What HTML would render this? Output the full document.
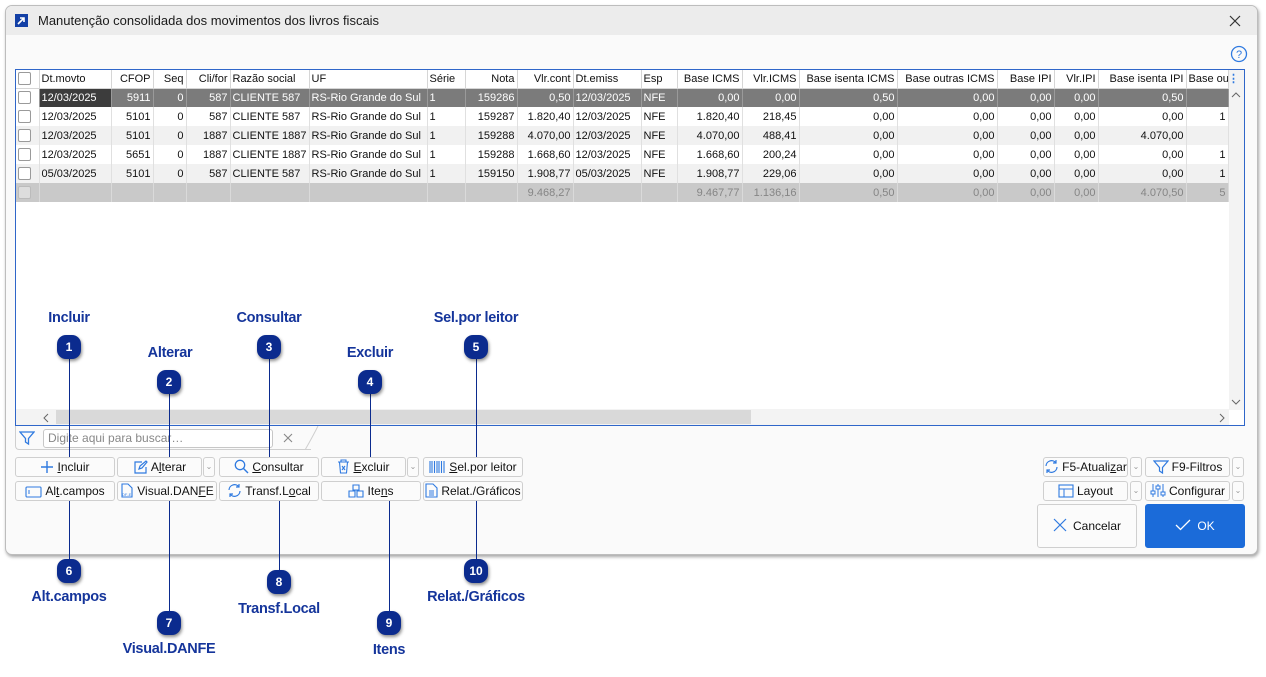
<!DOCTYPE html>
<html><head><meta charset="utf-8"><style>
*{box-sizing:border-box;margin:0;padding:0}
body{width:1266px;height:677px;background:#fff;font-family:"Liberation Sans",sans-serif;position:relative;overflow:hidden;font-size:12px;color:#111}
.win{position:absolute;left:5px;top:5px;width:1253px;height:550px;background:#fafafa;border:1px solid #bdbdbd;border-radius:7px;box-shadow:1px 2px 3px rgba(0,0,0,.35);overflow:hidden}
.title{position:absolute;left:0;top:0;right:0;height:29px;background:#ececec}
.title .t{position:absolute;left:32px;top:7px;font-size:13px;color:#1a1a1a}
.ico{position:absolute;left:9px;top:8px;width:13px;height:13px;background:#1340a6}
.abs{position:absolute}
.grid{position:absolute;left:15px;top:69px;width:1230px;height:357px;border:1px solid #2f66c9;background:#fff;overflow:hidden}
table{border-collapse:collapse;table-layout:fixed;position:absolute;left:0;top:0;width:1212px}
td{height:19px;border-right:1px solid #e0e0e0;white-space:nowrap;overflow:hidden;padding:0 2px;font-size:11px;text-align:right}
tr.h td{height:18px;background:#fff;border-right:1px solid #d6d6d6;border-bottom:1px solid #d6d6d6}
tr.s td{background:#7b7b7b;color:#fff;border-right:1px solid #9a9a9a}
tr.s td.d{background:#3c3c3c}
tr.a td{background:#f1f1f1}
tr.tt td{background:#c9c9c9;color:#858585;border-right:1px solid #dadada}
td.l{text-align:left}
.cb{display:inline-block;width:13px;height:13px;border:1px solid #9a9a9a;background:#fff;border-radius:2px;vertical-align:middle}
.btn{position:absolute;height:20px;border:1px solid #cfcfcf;border-radius:3px;background:#fbfbfb;font-size:12px;text-align:center;line-height:18px;color:#111}
.btn svg{vertical-align:-3px;margin-right:3px}
.dd{position:absolute;height:20px;width:12px;border:1px solid #cfcfcf;border-radius:3px;background:#fbfbfb;color:#999;font-size:8px;text-align:center;line-height:18px}
.badge{position:absolute;width:24px;height:24px;border-radius:9px;background:#0b2b8e;color:#fff;font-weight:bold;font-size:12px;text-align:center;line-height:24px;box-shadow:1px 2px 3px rgba(0,0,0,.45);z-index:5}
.lbl{position:absolute;color:#15359b;font-weight:bold;font-size:14.5px;transform:translateX(-50%);white-space:nowrap;z-index:5;letter-spacing:-0.3px}
.vl{position:absolute;width:1px;background:#0b2b8e;z-index:4}
</style></head><body>
<div class="win">
 <div class="title"><div class="ico"><svg width="13" height="13"><path d="M3 10L9 4M5 4h4v4" stroke="#fff" stroke-width="1.6" fill="none"/></svg></div><div class="t">Manutenção consolidada dos movimentos dos livros fiscais</div>
 <svg class="abs" style="left:1223px;top:9px" width="12" height="12"><path d="M1 1L11 11M11 1L1 11" stroke="#333" stroke-width="1.2"/></svg></div>
 <svg class="abs" style="left:1224px;top:39px" width="18" height="18"><circle cx="9" cy="9" r="7.5" stroke="#2f7ae0" stroke-width="1.3" fill="none"/><text x="9" y="13" font-size="11" text-anchor="middle" fill="#2f7ae0" font-family="Liberation Sans">?</text></svg>
</div>

<div class="grid">
<table>
<colgroup><col style="width:23px"><col style="width:72px"><col style="width:42px"><col style="width:33px"><col style="width:44px"><col style="width:79px"><col style="width:118px"><col style="width:38px"><col style="width:52px"><col style="width:56px"><col style="width:68px"><col style="width:36px"><col style="width:65px"><col style="width:57px"><col style="width:98px"><col style="width:100px"><col style="width:57px"><col style="width:44px"><col style="width:88px"><col style="width:42px"></colgroup>
<tr class="h"><td class="l"><span class="cb"></span></td><td class="l">Dt.movto</td><td>CFOP</td><td>Seq</td><td>Cli/for</td><td class="l">Razão social</td><td class="l">UF</td><td class="l">Série</td><td>Nota</td><td>Vlr.cont</td><td class="l">Dt.emiss</td><td class="l">Esp</td><td>Base ICMS</td><td>Vlr.ICMS</td><td>Base isenta ICMS</td><td>Base outras ICMS</td><td>Base IPI</td><td>Vlr.IPI</td><td>Base isenta IPI</td><td class="l">Base ou</td></tr>
<tr class="s"><td class="l" style="background:#fff"><span class="cb"></span></td><td class="l d">12/03/2025</td><td>5911</td><td>0</td><td>587</td><td class="l">CLIENTE 587</td><td class="l">RS-Rio Grande do Sul</td><td class="l">1</td><td>159286</td><td>0,50</td><td class="l">12/03/2025</td><td class="l">NFE</td><td>0,00</td><td>0,00</td><td>0,50</td><td>0,00</td><td>0,00</td><td>0,00</td><td>0,50</td><td></td></tr>
<tr><td class="l"><span class="cb"></span></td><td class="l">12/03/2025</td><td>5101</td><td>0</td><td>587</td><td class="l">CLIENTE 587</td><td class="l">RS-Rio Grande do Sul</td><td class="l">1</td><td>159287</td><td>1.820,40</td><td class="l">12/03/2025</td><td class="l">NFE</td><td>1.820,40</td><td>218,45</td><td>0,00</td><td>0,00</td><td>0,00</td><td>0,00</td><td>0,00</td><td>1</td></tr>
<tr class="a"><td class="l"><span class="cb"></span></td><td class="l">12/03/2025</td><td>5101</td><td>0</td><td>1887</td><td class="l">CLIENTE 1887</td><td class="l">RS-Rio Grande do Sul</td><td class="l">1</td><td>159288</td><td>4.070,00</td><td class="l">12/03/2025</td><td class="l">NFE</td><td>4.070,00</td><td>488,41</td><td>0,00</td><td>0,00</td><td>0,00</td><td>0,00</td><td>4.070,00</td><td></td></tr>
<tr><td class="l"><span class="cb"></span></td><td class="l">12/03/2025</td><td>5651</td><td>0</td><td>1887</td><td class="l">CLIENTE 1887</td><td class="l">RS-Rio Grande do Sul</td><td class="l">1</td><td>159288</td><td>1.668,60</td><td class="l">12/03/2025</td><td class="l">NFE</td><td>1.668,60</td><td>200,24</td><td>0,00</td><td>0,00</td><td>0,00</td><td>0,00</td><td>0,00</td><td>1</td></tr>
<tr class="a"><td class="l"><span class="cb"></span></td><td class="l">05/03/2025</td><td>5101</td><td>0</td><td>587</td><td class="l">CLIENTE 587</td><td class="l">RS-Rio Grande do Sul</td><td class="l">1</td><td>159150</td><td>1.908,77</td><td class="l">05/03/2025</td><td class="l">NFE</td><td>1.908,77</td><td>229,06</td><td>0,00</td><td>0,00</td><td>0,00</td><td>0,00</td><td>0,00</td><td>1</td></tr>
<tr class="tt"><td class="l"><span class="cb" style="background:#ddd;border-color:#bbb"></span></td><td></td><td></td><td></td><td></td><td></td><td></td><td></td><td></td><td>9.468,27</td><td></td><td></td><td>9.467,77</td><td>1.136,16</td><td>0,50</td><td>0,00</td><td>0,00</td><td>0,00</td><td>4.070,50</td><td>5</td></tr>
</table>
<div class="abs" style="right:0;top:0;width:15px;height:340px;background:#f3f3f3"></div>
<div class="abs" style="right:5px;top:2px;color:#2f7ae0;font-size:11px;font-weight:bold">⋮</div>
<svg class="abs" style="right:3px;top:21px" width="10" height="8"><path d="M1 6L5 2L9 6" stroke="#666" fill="none"/></svg>
<svg class="abs" style="right:3px;top:328px" width="10" height="8"><path d="M1 2L5 6L9 2" stroke="#666" fill="none"/></svg>
<div class="abs" style="left:0;top:339px;width:1213px;height:16px;background:#f3f3f3"></div>
<div class="abs" style="left:40px;top:340px;width:695px;height:14px;background:#d9d9d9"></div>
<svg class="abs" style="left:26px;top:343px" width="8" height="10"><path d="M6 1L2 5L6 9" stroke="#666" fill="none"/></svg>
<svg class="abs" style="left:1202px;top:343px" width="8" height="10"><path d="M2 1L6 5L2 9" stroke="#666" fill="none"/></svg>
</div>

<!-- search -->
<div class="abs" style="left:15px;top:426px;width:296px;height:24px;border:1px solid #cfcfcf;border-top:none;border-right:none;border-radius:0 0 0 4px"></div>
<svg class="abs" style="left:305px;top:426px" width="14" height="24"><path d="M0 24Q8 10 13 0" stroke="#cfcfcf" fill="none"/></svg>
<svg class="abs" style="left:19px;top:430px" width="16" height="16"><path d="M1 2H15L9.5 8.5V14L6.5 12V8.5Z" stroke="#2f7ae0" stroke-width="1.3" fill="none"/></svg>
<div class="abs" style="left:43px;top:429px;width:230px;height:19px;border:1px solid #c7c7c7;border-radius:3px;background:#fff;color:#888;font-size:12px;line-height:17px;padding-left:4px">Digite aqui para buscar…</div>
<svg class="abs" style="left:283px;top:433px" width="10" height="10"><path d="M1 1L9 9M9 1L1 9" stroke="#888" stroke-width="1.1"/></svg>

<!-- buttons -->
<div class="btn" style="left:15px;top:457px;width:100px"><svg width="14" height="14"><path d="M7 1V13M1 7H13" stroke="#2f7ae0" stroke-width="1.4"/></svg><u>I</u>ncluir</div>
<div class="btn" style="left:117px;top:457px;width:85px"><svg width="15" height="14"><path d="M9 2H2V13H13V7M6 9L7 6L13 1L14 2L9 8Z" stroke="#2f7ae0" stroke-width="1.2" fill="none"/></svg>A<u>l</u>terar</div>
<div class="dd" style="left:203px;top:457px">⌄</div>
<div class="btn" style="left:219px;top:457px;width:100px"><svg width="15" height="15"><circle cx="6" cy="6" r="4.7" stroke="#2f7ae0" stroke-width="1.3" fill="none"/><path d="M9.5 9.5L14 14" stroke="#2f7ae0" stroke-width="1.4"/></svg><u>C</u>onsultar</div>
<div class="btn" style="left:321px;top:457px;width:85px"><svg width="13" height="15"><path d="M1 3H12M4 3V1H9V3M2.5 3L3.5 14H9.5L10.5 3M5 7L8 11M8 7L5 11" stroke="#2f7ae0" stroke-width="1.1" fill="none"/></svg><u>E</u>xcluir</div>
<div class="dd" style="left:407px;top:457px">⌄</div>
<div class="btn" style="left:423px;top:457px;width:100px"><svg width="17" height="14"><path d="M1 1V13M3 1V13M5.5 1V13M8 1V13M10 1V13M12.5 1V13M15 1V13" stroke="#2f7ae0" stroke-width="1.1"/></svg><u>S</u>el.por leitor</div>
<div class="btn" style="left:15px;top:481px;width:100px"><svg width="17" height="12"><rect x="1" y="1" width="15" height="10" rx="1" stroke="#2f7ae0" stroke-width="1.1" fill="none"/><path d="M4 4V8" stroke="#2f7ae0"/></svg>Al<u>t</u>.campos</div>
<div class="btn" style="left:117px;top:481px;width:100px"><svg width="14" height="15"><path d="M2 1H8L12 5V14H2Z" stroke="#2f7ae0" stroke-width="1.1" fill="none"/><text x="2" y="13" font-size="4" fill="#2f7ae0">DF-E</text></svg>Visual.DAN<u>F</u>E</div>
<div class="btn" style="left:219px;top:481px;width:100px"><svg width="15" height="15"><path d="M2 7A5.5 5.5 0 0 1 12 4M13 8A5.5 5.5 0 0 1 3 11M12 1V4H9M3 14V11H6" stroke="#2f7ae0" stroke-width="1.2" fill="none"/></svg>Transf.L<u>o</u>cal</div>
<div class="btn" style="left:321px;top:481px;width:100px"><svg width="16" height="14"><path d="M5 1H11V6H5ZM1 7H7V13H1ZM9 7H15V13H9Z" stroke="#2f7ae0" stroke-width="1.1" fill="none"/></svg>Ite<u>n</u>s</div>
<div class="btn" style="left:423px;top:481px;width:100px"><svg width="13" height="15"><path d="M1 1H8L12 5V14H1ZM4 8H9M4 10H9M4 12H9" stroke="#2f7ae0" stroke-width="1.1" fill="none"/></svg>Relat./Gráficos</div>

<div class="btn" style="left:1043px;top:457px;width:85px"><svg width="15" height="15"><path d="M2 7A5.5 5.5 0 0 1 12 4M13 8A5.5 5.5 0 0 1 3 11M12 1V4H9M3 14V11H6" stroke="#2f7ae0" stroke-width="1.2" fill="none"/></svg>F5-Atuali<u>z</u>ar</div>
<div class="dd" style="left:1130px;top:457px">⌄</div>
<div class="btn" style="left:1145px;top:457px;width:85px"><svg width="16" height="15"><path d="M1 2H15L9.5 8.5V14L6.5 12V8.5Z" stroke="#2f7ae0" stroke-width="1.2" fill="none"/></svg>F9-Filtros</div>
<div class="dd" style="left:1232px;top:457px">⌄</div>
<div class="btn" style="left:1043px;top:481px;width:85px"><svg width="16" height="14"><rect x="1" y="1" width="14" height="12" stroke="#2f7ae0" stroke-width="1.1" fill="none"/><path d="M1 5H15M6 5V13" stroke="#2f7ae0"/></svg>Layout</div>
<div class="dd" style="left:1130px;top:481px">⌄</div>
<div class="btn" style="left:1145px;top:481px;width:85px"><svg width="16" height="15"><path d="M3 1V14M8 1V14M13 1V14" stroke="#2f7ae0"/><rect x="1" y="8" width="4" height="3" fill="#fff" stroke="#2f7ae0"/><rect x="6" y="3" width="4" height="3" fill="#fff" stroke="#2f7ae0"/><rect x="11" y="9" width="4" height="3" fill="#fff" stroke="#2f7ae0"/></svg>Configurar</div>
<div class="dd" style="left:1232px;top:481px">⌄</div>
<div class="btn" style="left:1037px;top:504px;width:100px;height:44px;line-height:42px"><svg width="14" height="14" style="vertical-align:-2px;margin-right:6px"><path d="M1 1L13 13M13 1L1 13" stroke="#2f7ae0" stroke-width="1.2"/></svg>Cancelar</div>
<div class="btn" style="left:1145px;top:504px;width:100px;height:44px;line-height:42px;background:#1b6bd9;border-color:#1b6bd9;color:#fff"><svg width="16" height="12" style="vertical-align:-1px;margin-right:6px"><path d="M1 6L5.5 10.5L15 1" stroke="#fff" stroke-width="1.3" fill="none"/></svg>OK</div>

<!-- annotations -->
<div class="vl" style="left:69px;top:347px;height:110px"></div>
<div class="vl" style="left:169px;top:382px;height:75px"></div>
<div class="vl" style="left:269px;top:347px;height:110px"></div>
<div class="vl" style="left:370px;top:382px;height:75px"></div>
<div class="vl" style="left:476px;top:347px;height:110px"></div>
<div class="vl" style="left:69px;top:501px;height:70px"></div>
<div class="vl" style="left:169px;top:501px;height:122px"></div>
<div class="vl" style="left:279px;top:501px;height:81px"></div>
<div class="vl" style="left:389px;top:501px;height:122px"></div>
<div class="vl" style="left:476px;top:501px;height:70px"></div>

<div class="badge" style="left:57px;top:335px">1</div>
<div class="badge" style="left:157px;top:370px">2</div>
<div class="badge" style="left:257px;top:335px">3</div>
<div class="badge" style="left:358px;top:370px">4</div>
<div class="badge" style="left:464px;top:335px">5</div>
<div class="badge" style="left:57px;top:559px">6</div>
<div class="badge" style="left:157px;top:611px">7</div>
<div class="badge" style="left:267px;top:570px">8</div>
<div class="badge" style="left:377px;top:611px">9</div>
<div class="badge" style="left:464px;top:559px">10</div>

<div class="lbl" style="left:69px;top:310px">Incluir</div>
<div class="lbl" style="left:170px;top:345px">Alterar</div>
<div class="lbl" style="left:269px;top:310px">Consultar</div>
<div class="lbl" style="left:370px;top:345px">Excluir</div>
<div class="lbl" style="left:476px;top:310px">Sel.por leitor</div>
<div class="lbl" style="left:69px;top:589px">Alt.campos</div>
<div class="lbl" style="left:169px;top:641px">Visual.DANFE</div>
<div class="lbl" style="left:279px;top:601px">Transf.Local</div>
<div class="lbl" style="left:389px;top:642px">Itens</div>
<div class="lbl" style="left:476px;top:589px">Relat./Gráficos</div>
</body></html>
